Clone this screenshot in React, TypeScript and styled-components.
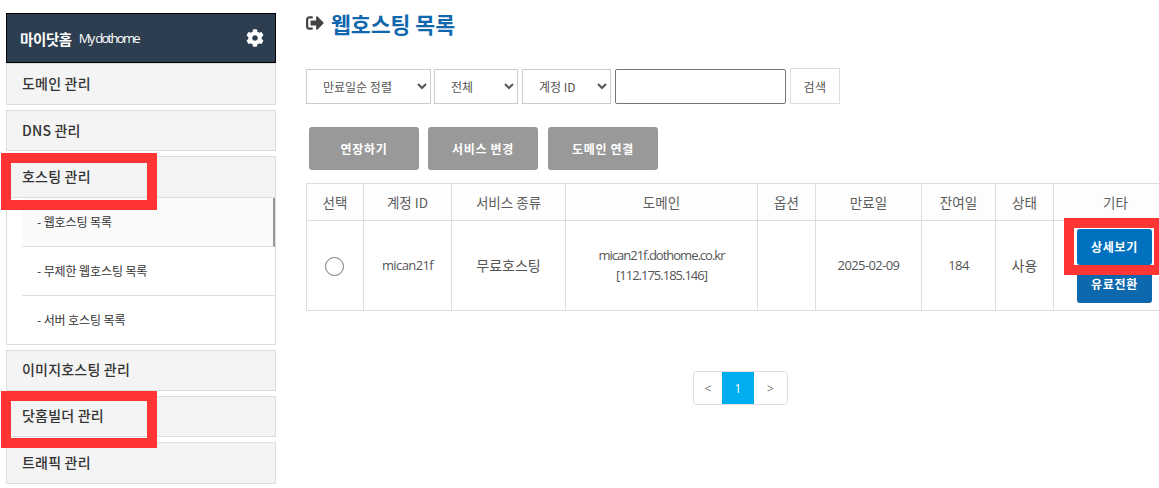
import React from "react";
import styled, { createGlobalStyle } from "styled-components";
import { FaCog, FaSignOutAlt } from "react-icons/fa";

const Global = createGlobalStyle`
  html, body { margin: 0; padding: 0; background: #fff; }
  body { font-family: "Noto Sans CJK KR", "Noto Sans", sans-serif; }
  * { box-sizing: border-box; }
`;

const Page = styled.div`
  position: relative;
  width: 1159px;
  height: 488px;
  overflow: hidden;
  display: flex;
  align-items: flex-start;
  padding: 13px 0 0 6px;
  gap: 30px;
`;

const Sidebar = styled.nav`
  width: 270px;
  flex: none;
`;

const SideHeader = styled.div`
  height: 50px;
  background: #2c3e50;
  border: 1px solid #000;
  color: #fff;
  display: flex;
  align-items: center;
  padding: 0 11px 0 13px;
`;

const SideTitle = styled.strong`
  font-size: 14.5px;
  font-weight: 700;
  letter-spacing: -0.4px;
`;

const SideSub = styled.span`
  font-size: 13px;
  margin-left: 7px;
  letter-spacing: -1.7px;
  font-family: "Open Sans", sans-serif;
  flex: 1;
`;

const MenuGroup = styled.div<{ $gap?: number }>`
  border: 1px solid #ddd;
  margin-top: ${(p) => p.$gap ?? 5}px;
  background: #fff;
`;

const MenuHead = styled.div<{ $h: number; $pb?: number }>`
  height: ${(p) => p.$h}px;
  background: #f4f4f4;
  display: flex;
  align-items: center;
  padding: 0 0 ${(p) => p.$pb ?? 3}px 15px;
  font-size: 14px;
  font-weight: 500;
  color: #333;
  letter-spacing: 0.2px;
`;

const SubList = styled.ul`
  list-style: none;
  margin: 0;
  padding: 0 0 0 15px;
  border-top: 1px solid #ddd;
`;

const SubItem = styled.li<{ $active?: boolean; $last?: boolean }>`
  height: ${(p) => (p.$last ? 48 : 49)}px;
  display: flex;
  align-items: center;
  padding: 0 0 2px 15px;
  font-size: 12px;
  color: #333;
  letter-spacing: -0.1px;
  background: ${(p) => (p.$active ? "#fafafa" : "#fff")};
  border-bottom: ${(p) => (p.$last ? "none" : "1px solid #ddd")};
  border-right: ${(p) => (p.$active ? "2px solid #999" : "none")};
`;

const Main = styled.main`
  width: 871px;
  flex: none;
`;

const Title = styled.h1`
  margin: 0;
  height: 24px;
  padding-bottom: 4px;
  display: flex;
  align-items: center;
  gap: 7px;
  font-size: 21.6px;
  font-weight: 700;
  color: #0f68ad;
  svg { color: #444; flex: none; }
`;

const FilterRow = styled.div`
  display: flex;
  align-items: center;
  margin-top: 31px;
  height: 36px;
`;

const Select = styled.select<{ $w: number; $mr: number }>`
  width: ${(p) => p.$w}px;
  margin-right: ${(p) => p.$mr}px;
  height: 35px;
  background: #fff;
  border: 1px solid #ccc;
  font-family: inherit;
  font-size: 12px;
  letter-spacing: 0;
  color: #555;
  padding: 0 0 0 12px;
`;

const SearchInput = styled.input`
  width: 171px;
  height: 35px;
  border: 1px solid #767676;
  border-radius: 2px;
  margin-right: 4px;
  background: #fff;
`;

const SearchButton = styled.button`
  width: 50px;
  height: 36px;
  border: 1px solid #ddd;
  background: #fff;
  color: #555;
  font-family: inherit;
  font-size: 12px;
  letter-spacing: 0.5px;
  padding: 0;
`;

const Actions = styled.div`
  display: flex;
  gap: 9px;
  margin: 23px 0 13px 3px;
`;

const ActionButton = styled.button<{ $mr?: number }>`
  width: 110px;
  height: 43px;
  border: none;
  border-radius: 3px;
  background: #999;
  color: #fff;
  font-family: inherit;
  font-size: 12px;
  font-weight: 700;
  letter-spacing: 0.7px;
  padding: 0;
  margin-right: ${(p) => p.$mr ?? 0}px;
`;

const Table = styled.table`
  width: 871px;
  table-layout: fixed;
  border-collapse: collapse;
  font-size: 14px;
  color: #555;
`;

const Th = styled.th`
  height: 37px;
  padding: 0;
  background: #fdfdfd;
  border: 1px solid #ddd;
  font-weight: 400;
  font-size: 13.5px;
  color: #5c5c5c;
`;

const Td = styled.td`
  height: 90px;
  padding: 0 0 2px;
  border: 1px solid #ddd;
  text-align: center;
  line-height: 20px;
`;

const Tight = styled.span<{ $s?: number }>`
  display: inline-block;
  font-size: 13px;
  letter-spacing: ${(p) => p.$s ?? -0.6}px;
  font-family: "Open Sans", sans-serif;
`;

const Radio = styled.input`
  width: 19px;
  height: 19px;
  margin: 2px 0 0 -1px;
  display: inline-block;
  vertical-align: middle;
`;

const ButtonStack = styled.div`
  display: flex;
  flex-direction: column;
  align-items: center;
  margin: 2px 0 0 -2px;
`;

const RowButton = styled.button<{ $dark?: boolean; $h: number }>`
  width: 75px;
  height: ${(p) => p.$h}px;
  border: none;
  border-radius: 3px;
  background: ${(p) => (p.$dark ? "#0d68ad" : "#0071bf")};
  color: #fff;
  font-family: inherit;
  font-size: 12px;
  font-weight: 700;
  letter-spacing: 0.7px;
  padding: 0;
`;

const Pager = styled.div`
  display: flex;
  width: 95px;
  height: 34px;
  margin: 60px 0 0 387px;
  border: 1px solid #ddd;
  border-radius: 4px;
  overflow: hidden;
`;

const PageCell = styled.div<{ $active?: boolean; $w: number }>`
  width: ${(p) => p.$w}px;
  flex: none;
  display: flex;
  align-items: center;
  justify-content: center;
  font-size: 12px;
  font-family: "Open Sans", sans-serif;
  color: ${(p) => (p.$active ? "#fff" : "#777")};
  background: ${(p) => (p.$active ? "#00aeef" : "#fff")};
  margin: ${(p) => (p.$active ? "-1px 0" : "0")};
`;

const Mark = styled.div<{ $x: number; $y: number; $w: number; $h: number }>`
  position: absolute;
  left: ${(p) => p.$x}px;
  top: ${(p) => p.$y}px;
  width: ${(p) => p.$w}px;
  height: ${(p) => p.$h}px;
  border: 10px solid #ff3434;
  pointer-events: none;
`;

const widths = [57, 88, 114, 192, 58, 106, 74, 58, 124];
const headers = ["선택", "계정 ID", "서비스 종류", "도메인", "옵션", "만료일", "잔여일", "상태", "기타"];

export default function App() {
  return (
    <Page>
      <Global />
      <Sidebar>
        <SideHeader>
          <SideTitle>마이닷홈</SideTitle>
          <SideSub>My dothome</SideSub>
          <FaCog size={18} />
        </SideHeader>
        <MenuGroup $gap={0}><MenuHead $h={40}>도메인 관리</MenuHead></MenuGroup>
        <MenuGroup><MenuHead $h={39} $pb={2}>DNS 관리</MenuHead></MenuGroup>
        <MenuGroup>
          <MenuHead $h={40}>호스팅 관리</MenuHead>
          <SubList>
            <SubItem $active>- 웹호스팅 목록</SubItem>
            <SubItem>- 무제한 웹호스팅 목록</SubItem>
            <SubItem $last>- 서버 호스팅 목록</SubItem>
          </SubList>
        </MenuGroup>
        <MenuGroup><MenuHead $h={39}>이미지호스팅 관리</MenuHead></MenuGroup>
        <MenuGroup><MenuHead $h={39}>닷홈빌더 관리</MenuHead></MenuGroup>
        <MenuGroup><MenuHead $h={40}>트래픽 관리</MenuHead></MenuGroup>
      </Sidebar>
      <Main>
        <Title><FaSignOutAlt size={18} />웹호스팅 목록</Title>
        <FilterRow>
          <Select $w={125} $mr={3}><option>만료일순 정렬</option></Select>
          <Select $w={84} $mr={4}><option>전체</option></Select>
          <Select $w={89} $mr={4}><option>계정 ID</option></Select>
          <SearchInput />
          <SearchButton>검색</SearchButton>
        </FilterRow>
        <Actions>
          <ActionButton>연장하기</ActionButton>
          <ActionButton $mr={1}>서비스 변경</ActionButton>
          <ActionButton>도메인 연결</ActionButton>
        </Actions>
        <Table>
          <colgroup>
            {widths.map((w, i) => <col key={i} style={{ width: w }} />)}
          </colgroup>
          <thead>
            <tr>{headers.map((h) => <Th key={h}>{h}</Th>)}</tr>
          </thead>
          <tbody>
            <tr>
              <Td><Radio type="radio" name="sel" /></Td>
              <Td><Tight>mican21f</Tight></Td>
              <Td>무료호스팅</Td>
              <Td><Tight $s={-1}>mican21f.dothome.co.kr<br />[112.175.185.146]</Tight></Td>
              <Td />
              <Td><Tight>2025-02-09</Tight></Td>
              <Td><Tight>184</Tight></Td>
              <Td>사용</Td>
              <Td>
                <ButtonStack>
                  <RowButton $h={36}>상세보기</RowButton>
                  <RowButton $dark $h={38}>유료전환</RowButton>
                </ButtonStack>
              </Td>
            </tr>
          </tbody>
        </Table>
        <Pager>
          <PageCell $w={28}>&lt;</PageCell>
          <PageCell $active $w={32}>1</PageCell>
          <PageCell $w={33}>&gt;</PageCell>
        </Pager>
      </Main>
      <Mark $x={1} $y={153} $w={156} $h={57} />
      <Mark $x={1} $y={391} $w={156} $h={57} />
      <Mark $x={1064} $y={218} $w={100} $h={57} />
    </Page>
  );
}
